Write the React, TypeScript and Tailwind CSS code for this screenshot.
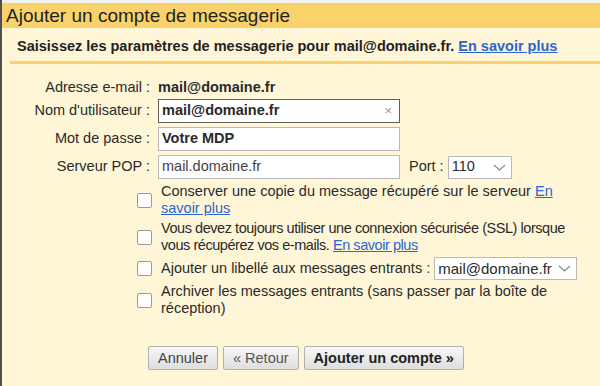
import React from "react";

const link = "text-[#2a66cf] underline";

function Checkbox() {
  return <span className="block size-[15px] shrink-0 rounded-[2px] border border-[#9a9a9a] bg-white" />;
}

function Chevron() {
  return (
    <svg width="13" height="7" viewBox="0 0 13 7" className="shrink-0">
      <path d="M1 1 6.5 6 12 1" fill="none" stroke="#888" strokeWidth="1.1" />
    </svg>
  );
}

function Btn({ children, tone }: { children: React.ReactNode; tone: string }) {
  return (
    <button
      className={
        "h-[24px] rounded-[2px] border border-[#b0b0b0] bg-gradient-to-b from-[#f7f7f7] to-[#dedede] px-[9px] leading-none " +
        tone
      }
    >
      {children}
    </button>
  );
}

export default function App() {
  return (
    <div className="h-[386px] w-[600px] overflow-hidden border-l-2 border-[#505050] bg-[#fff6d8] font-['Liberation_Sans',Arial,sans-serif] text-[14.5px] text-[#2a2a2a]">
      <div className="h-[3px] bg-[#f1f1ee]" />
      <div className="h-[25px] bg-[#f9d26c] pl-[4px] text-[19px] leading-[25px] text-[#1f1f1f]">
        Ajouter un compte de messagerie
      </div>

      <div className="pl-[15px] pt-[10px] font-bold leading-[16px] text-[#222]">
        Saisissez les paramètres de messagerie pour mail@domaine.fr.{" "}
        <span className={link}>En savoir plus</span>
      </div>
      <div className="ml-[8px] mt-[7px] h-[3px] bg-[#f9d26c]" />

      <div className="mt-[15px] grid grid-cols-[148px_1fr] items-center gap-x-[8px] gap-y-[4px]">
        <div className="text-right leading-[16px]">Adresse e-mail :</div>
        <div className="h-[16px] font-bold leading-[16px]">mail@domaine.fr</div>

        <div className="text-right">Nom d'utilisateur :</div>
        <div className="flex h-[24px] w-[242px] items-center justify-between border border-[#5e5e5e] bg-white px-[3px] font-bold">
          <span>mail@domaine.fr</span>
          <span className="pr-[4px] text-[13px] font-normal text-[#999]">×</span>
        </div>

        <div className="text-right">Mot de passe :</div>
        <div className="flex h-[24px] w-[242px] items-center border border-[#b9b9b9] bg-white px-[3px] font-bold">
          Votre MDP
        </div>

        <div className="text-right">Serveur POP :</div>
        <div className="flex items-center">
          <div className="flex h-[24px] w-[242px] items-center border border-[#b9b9b9] bg-white px-[3px] text-[#444]">
            mail.domaine.fr
          </div>
          <span className="ml-[9px]">Port :</span>
          <div className="ml-[4px] flex h-[23px] w-[64px] items-center justify-between border border-[#b9b9b9] bg-white pl-[3px] pr-[5px]">
            <span>110</span>
            <Chevron />
          </div>
        </div>
      </div>

      <div className="ml-[135px] mt-[4px] flex flex-col gap-[3px] whitespace-nowrap leading-[17px]">
        <div className="flex items-center gap-[9px]">
          <Checkbox />
          <div>
            Conserver une copie du message récupéré sur le serveur{" "}
            <span className={link}>
              En
              <br />
              savoir plus
            </span>
          </div>
        </div>
        <div className="flex items-center gap-[9px]">
          <Checkbox />
          <div className="tracking-[-0.45px]">
            Vous devez toujours utiliser une connexion sécurisée (SSL) lorsque
            <br />
            vous récupérez vos e-mails. <span className={link}>En savoir plus</span>
          </div>
        </div>
        <div className="flex items-center gap-[9px]">
          <Checkbox />
          <div>Ajouter un libellé aux messages entrants :</div>
          <div className="-ml-[5px] flex h-[23px] w-[143px] items-center justify-between border border-[#b9b9b9] bg-white pl-[3px] pr-[5px] text-[15px]">
            <span>mail@domaine.fr</span>
            <Chevron />
          </div>
        </div>
        <div className="flex items-center gap-[9px]">
          <Checkbox />
          <div>
            Archiver les messages entrants (sans passer par la boîte de
            <br />
            réception)
          </div>
        </div>
      </div>

      <div className="ml-[146px] mt-[29px] flex gap-[5px]">
        <Btn tone="text-[#444]">Annuler</Btn>
        <Btn tone="text-[#555]">« Retour</Btn>
        <Btn tone="font-bold text-[#222]">Ajouter un compte »</Btn>
      </div>
    </div>
  );
}
